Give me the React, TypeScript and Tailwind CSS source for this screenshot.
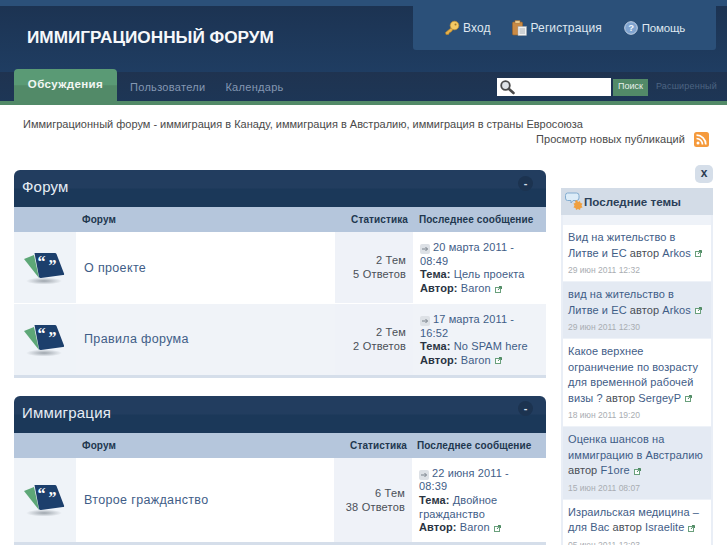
import type { ReactNode } from "react";

const sans = "font-['Liberation_Sans',Arial,sans-serif]";

function KeyIcon() {
  return (
    <svg width="16" height="16" viewBox="0 0 16 16">
      <path d="M7 8 L1.500 12.500 L2 14.500 L4.500 14.500 L5.500 12.500 L7 12 L9 9.500" fill="#e6b04a" stroke="#b98322" strokeWidth="0.6" />
      <circle cx="10.500" cy="5.500" r="4.300" fill="#f3c964" stroke="#c4912e" strokeWidth="0.7" />
      <circle cx="11.500" cy="4.500" r="1" fill="#a37a2a" />
    </svg>
  );
}

function ClipboardIcon() {
  return (
    <svg width="15" height="16" viewBox="0 0 15 16">
      <rect x="0.500" y="2" width="10" height="13" rx="1" fill="#c98a45" stroke="#9c6428" strokeWidth="0.6" />
      <rect x="3" y="0.500" width="5" height="3" fill="#e8c98c" stroke="#9c6428" strokeWidth="0.5" />
      <rect x="6" y="6.500" width="8.500" height="9" fill="#f1f2f2" stroke="#a5a9ad" strokeWidth="0.5" />
      <path d="M7.500 9h5.500M7.500 11h5.500M7.500 13h5.500" stroke="#9aa0a6" strokeWidth="0.8" />
    </svg>
  );
}

function HelpIcon() {
  return (
    <svg width="14" height="14" viewBox="0 0 14 14">
      <circle cx="7" cy="7" r="6.300" fill="#7fa3cf" stroke="#c5d4e6" strokeWidth="1" />
      <text x="7" y="10.400" textAnchor="middle" fontSize="9.500" fontWeight="700" fill="#f2f6fb" fontFamily="Liberation Sans">?</text>
    </svg>
  );
}

function SearchIcon() {
  return (
    <svg width="16" height="16" viewBox="0 0 16 16" className="shrink-0">
      <circle cx="6.500" cy="6.500" r="4.300" fill="#dfe3e7" stroke="#4a4a4a" strokeWidth="1.800" />
      <path d="M10 10l4.500 4" stroke="#4a4a4a" strokeWidth="2.600" strokeLinecap="round" />
    </svg>
  );
}

function RssIcon() {
  return (
    <svg width="15" height="15" viewBox="0 0 15 15">
      <rect width="15" height="15" rx="2.500" fill="#f59a3c" />
      <circle cx="4" cy="11" r="1.500" fill="#fff" />
      <path d="M2.500 6.500a6 6 0 0 1 6 6M2.500 3.200a9.300 9.300 0 0 1 9.300 9.300" fill="none" stroke="#fff" strokeWidth="1.700" />
    </svg>
  );
}

function ForumIcon({ id }: { id: string }) {
  return (
    <svg width="42" height="34" viewBox="0 0 42 34">
      <defs>
        <radialGradient id={id}>
          <stop offset="0%" stopColor="#5c6670" stopOpacity="0.55" />
          <stop offset="100%" stopColor="#5c6670" stopOpacity="0" />
        </radialGradient>
      </defs>
      <ellipse cx="21" cy="30" rx="18" ry="3.500" fill={`url(#${id})`} />
      <path d="M1 8 L11 4 L16 27 Z" fill="#5da777" />
      <path d="M11.500 2 L32 2 Q33 2 33.500 3 L41 22.500 Q41.500 24 40 24 L18 27 Q16.500 27.200 16 26 Z" fill="#1c3f6c" />
      <text x="14.500" y="16" fontSize="16" fontWeight="700" fill="#fff" fontFamily="Liberation Serif">“</text>
      <text x="25.500" y="20" fontSize="16" fontWeight="700" fill="#fff" fontFamily="Liberation Serif">”</text>
    </svg>
  );
}

function SidebarIcon() {
  return (
    <svg width="18" height="20" viewBox="0 0 18 20">
      <path d="M2.500 1h9q2.500 0 2.500 2.500v2.500q0 2.500-2.500 2.500H8l-2 2.500v-2.500H2.500q-2 0-2-2.500V3.500q0-2.500 2-2.500z" fill="#dcecf8" stroke="#82acd0" strokeWidth="1" />
      <path d="M10 9l2-1 1 2 2-1 .5 2 2 .5-1 2 1 2-2 .5-.5 2-2-1-2 1-.5-2-2-.5 1-2-1-2 2-.5z" fill="#f0a040" />
    </svg>
  );
}

function ProfileLink() {
  return (
    <svg width="7" height="7" viewBox="0 0 7 7" className="ml-1 inline-block align-[-0.5px]">
      <rect x="0.500" y="1.500" width="5" height="5" fill="#fff" stroke="#6aa07c" strokeWidth="1" />
      <path d="M3 4l3-3.500M4 0.500h2.500V3" fill="none" stroke="#4e8a63" strokeWidth="1" />
    </svg>
  );
}

function LastIcon() {
  return (
    <span className="mr-[3px] inline-flex h-[10px] w-[10px] items-center justify-center rounded-[2px] bg-[#dde1e6] align-[-1px]">
      <svg width="7" height="6" viewBox="0 0 7 6">
        <path d="M0 3h5.500M3.500 1l2 2-2 2" fill="none" stroke="#7b838c" strokeWidth="1" />
      </svg>
    </span>
  );
}

type ForumRow = {
  id: string;
  name: string;
  topics: string;
  replies: string;
  date: string;
  time: string;
  topic: string;
  alt?: boolean;
};

function Row({ id, name, topics, replies, date, time, topic, alt, wide }: ForumRow & { wide?: boolean }) {
  return (
    <div className={`flex items-stretch ${alt ? "bg-[#f0f3f8]" : "bg-white"}`}>
      <div className="flex w-[62px] shrink-0 items-center justify-center bg-[#eff3f8] pr-[2px] pt-[1px]">
        <ForumIcon id={id} />
      </div>
      <div className="flex flex-1 items-center pl-2 pt-[1px] text-[12.500px] tracking-[0.35px] text-[#3f5d87]">{name}</div>
      <div className="flex w-[78px] shrink-0 flex-col justify-center bg-[#eff2f8] pr-[7px] text-right text-[11px] leading-[14px] tracking-[0.2px] text-[#4a4f57]">
        <div>{topics}</div>
        <div>{replies}</div>
      </div>
      <div className={`shrink-0 pb-[7px] pl-[7px] pr-2 pt-[9px] text-[11px] leading-[13.700px] tracking-[0.12px] text-[#3f5d87] ${wide ? "w-[134px]" : "w-[133px]"}`}>
        <div className="pr-1">
          <LastIcon />
          {date} {time}
        </div>
        <div>
          <b className="font-bold text-[#2a3442]">Тема:</b> {topic}
        </div>
        <div>
          <b className="font-bold text-[#2a3442]">Автор:</b> Baron
          <ProfileLink />
        </div>
      </div>
    </div>
  );
}

function Category({ title, rows, wide }: { title: string; rows: ForumRow[]; wide?: boolean }) {
  return (
    <section>
      <div className="flex h-[37px] items-center justify-between rounded-t-[6px] bg-[linear-gradient(#223d5f_0%,#223d5f_48%,#1b3859_52%,#1b3859_100%)] pl-2 pr-[13px]">
        <h2 className="pb-[2px] text-[15px] font-normal tracking-[0.2px] text-[#e6edf5]">{title}</h2>
        <span className="mb-[11px] flex h-[15px] w-[15px] items-center justify-center rounded-full bg-[#1c3350] text-[11px] font-bold leading-none text-[#d5dfea]">
          -
        </span>
      </div>
      <div className="flex h-[25px] items-center bg-[#b5c6dc] text-[10px] font-bold tracking-[0.1px] text-[#21374f]">
        <div className="w-[68px] shrink-0" />
        <div className="flex-1">Форум</div>
        <div className="w-[71px] shrink-0 text-right">Статистика</div>
        <div className={`shrink-0 ${wide ? "w-[139px] pl-[10px]" : "w-[138px] pl-[11px]"}`}>Последнее сообщение</div>
      </div>
      <div className="flex flex-col gap-px">
        {rows.map((row) => (
          <Row key={row.id} wide={wide} {...row} />
        ))}
      </div>
      <div className="h-[3px] bg-[#d5deea]" />
    </section>
  );
}

function Topic({ title, author, date, alt }: { title: string; author: string; date: string; alt?: boolean }) {
  return (
    <div className={`px-[5px] pb-[4px] pt-[5px] ${alt ? "bg-[#e4eaf3]" : "bg-white"}`}>
      <div className="text-[11px] leading-[15.500px] tracking-[0.09px] text-[#3f5d87]">
        {title} <span className="text-[#4a4f57]">автор</span> {author}
        <ProfileLink />
      </div>
      <div className="mt-[2px] text-[8.500px] leading-[14px] text-[#a9adb2]">{date}</div>
    </div>
  );
}

export default function App() {
  return (
    <div className={`h-[545px] w-[727px] overflow-hidden bg-white ${sans}`}>
      <header className="bg-[#2b5079] pt-[6px]">
        <div className="relative h-[66px] bg-[linear-gradient(#1c3352,#1f3d62)] pl-[27px] pt-[21px] text-[17.200px] font-bold leading-[21px] text-[#f6f8fb]">
          ИММИГРАЦИОННЫЙ ФОРУМ
          <div className="absolute right-[11px] top-[-6px] flex h-[50px] w-[303px] items-center rounded-b-[3px] bg-[#2b5079] pl-[31px] pt-[6px] text-[12px] font-normal tracking-[0.1px] text-[#dfe7f0]">
            <span className="flex items-center gap-[3px]"><KeyIcon />Вход</span>
            <span className="ml-[21px] flex items-center gap-[4px]"><ClipboardIcon />Регистрация</span>
            <span className="ml-[22px] flex items-center gap-[4px] text-[11.500px] tracking-[-0.2px]"><HelpIcon />Помощь</span>
          </div>
        </div>
        <nav className="relative flex h-[29px] items-end bg-[linear-gradient(#1f3350,#1d3656)] pr-[10px]">
          <div className="absolute bottom-0 left-[14px] flex h-[32px] w-[103px] items-center justify-center rounded-t-[4px] bg-[linear-gradient(#5a9a75_0%,#5a9a75_50%,#528a68_52%,#528a68_100%)] text-[11.500px] font-bold tracking-[0.4px] text-[#f2f6f3]">
            Обсуждения
          </div>
          <div className="ml-[130px] flex h-full items-center gap-[20px] pt-[1px] text-[11px] tracking-[0.3px] text-[#8497b2]">
            <span>Пользователи</span>
            <span>Календарь</span>
          </div>
          <div className="mb-[5px] ml-auto flex items-center">
            <div className="flex h-[18px] w-[114px] items-center bg-white pl-[2px]"><SearchIcon /></div>
            <div className="ml-[2px] flex h-[17px] w-[35px] items-center justify-center bg-[#528a68] text-[9px] text-[#e8f0ea]">Поиск</div>
            <div className="ml-[8px] text-[9px] tracking-[0.2px] text-[#4d6482]">Расширенный</div>
          </div>
        </nav>
        <div className="h-[4px] bg-[#528a68]" />
      </header>

      <div className="px-[23px] pt-[12px] text-[11px] leading-[14px] text-[#4a4a4a]">
        Иммиграционный форум - иммиграция в Канаду, иммиграция в Австралию, иммиграция в страны Евросоюза
      </div>
      <div className="mt-[1px] flex items-center justify-end gap-[9px] pr-[18px] text-[11px] leading-[15px] tracking-[0.06px] text-[#4a4a4a]">
        <span>Просмотр новых публикаций</span>
        <RssIcon />
      </div>

      <div className="mt-[18px] flex items-start gap-[15px] pl-[14px]">
        <main className="flex w-[532px] shrink-0 flex-col gap-[18px] pt-[5px]">
          <Category
            title="Форум"
            rows={[
              { id: "f1", name: "О проекте", topics: "2 Тем", replies: "5 Ответов", date: "20 марта 2011 -", time: "08:49", topic: "Цель проекта" },
              { id: "f2", name: "Правила форума", topics: "2 Тем", replies: "2 Ответов", date: "17 марта 2011 -", time: "16:52", topic: "No SPAM here", alt: true },
            ]}
          />
          <Category
            wide
            title="Иммиграция"
            rows={[
              { id: "f3", name: "Второе гражданство", topics: "6 Тем", replies: "38 Ответов", date: "22 июня 2011 -", time: "08:39", topic: "Двойное гражданство" },
            ]}
          />
        </main>
        <aside className="w-[152px] shrink-0">
          <div className="flex justify-end">
            <span className="flex h-[18px] w-[18px] items-center justify-center rounded-[5px] bg-[#d5dee9] pb-[2px] text-[12px] font-bold leading-none text-[#2c3d52]">x</span>
          </div>
          <div className="mt-[5px] flex h-[27px] items-center gap-[1px] bg-[#d3dce7] pl-[4px] text-[11.600px] font-bold text-[#2b3f58]">
            <SidebarIcon />
            Последние темы
          </div>
          <div className="flex flex-col gap-px border-x-2 border-[#e9eef6] bg-[#eef2f8] pt-[10px]">
            <Topic title="Вид на жительство в Литве и ЕС" author="Arkos" date="29 июн 2011 12:32" />
            <Topic title="вид на жительство в Литве и ЕС" author="Arkos" date="29 июн 2011 12:30" alt />
            <Topic title="Какое верхнее ограничение по возрасту для временной рабочей визы ?" author="SergeyP" date="18 июн 2011 19:20" />
            <Topic title="Оценка шансов на иммиграцию в Австралию" author="F1ore" date="15 июн 2011 08:07" alt />
            <Topic title="Израильская медицина – для Вас" author="Israelite" date="05 июн 2011 12:03" />
          </div>
        </aside>
      </div>
    </div>
  );
}
